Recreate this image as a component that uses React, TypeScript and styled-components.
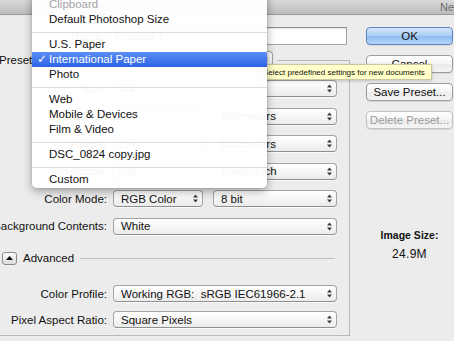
import React from "react";
import styled, { createGlobalStyle } from "styled-components";

const GlobalStyle = createGlobalStyle`
  html, body {
    margin: 0;
    padding: 0;
    background: #ececec;
  }
  body {
    font-family: "Liberation Sans", Arial, sans-serif;
  }
`;

const presetGroups: string[][] = [
  ["Clipboard", "Default Photoshop Size"],
  ["U.S. Paper", "International Paper", "Photo"],
  ["Web", "Mobile & Devices", "Film & Video"],
  ["DSC_0824 copy.jpg"],
  ["Custom"],
];

const Arrows = () => (
  <svg width="5" height="9" viewBox="0 0 5 9">
    <path d="M0 3.6 L2.5 0.6 L5 3.6 Z M0 5.4 L2.5 8.4 L5 5.4 Z" fill="#3a3a3a" />
  </svg>
);

type PopupProps = { width: number; value: string };

const PopupButton: React.FC<PopupProps> = ({ width, value }) => (
  <StyledPopup $width={width}>
    <StyledPopupText>{value}</StyledPopupText>
    <Arrows />
  </StyledPopup>
);

const App: React.FC = () => {
  return (
    <>
      <GlobalStyle />
      <StyledScreen>
        <StyledTitleBar>New</StyledTitleBar>
        <StyledBody>
          <StyledMainColumn>
            <StyledRow $height={18}>
              <StyledLabel $width={145} $gap={5}>Name:</StyledLabel>
              <StyledTextField $width={237} $height={18}>Untitled-1</StyledTextField>
            </StyledRow>

            <StyledGroupBox>
              <StyledGroupHeader>
                <StyledHeaderLabel>Preset:</StyledHeaderLabel>
                <PopupButton width={235} value="International Paper" />
              </StyledGroupHeader>

              <StyledRows>
                <StyledRow $height={17}>
                  <StyledLabel $width={146} $gap={6}>Size:</StyledLabel>
                  <PopupButton width={224} value="A4" />
                </StyledRow>
                <StyledRow $height={17}>
                  <StyledLabel $width={146} $gap={6}>Width:</StyledLabel>
                  <StyledTextField $width={90} $height={17}>210</StyledTextField>
                  <StyledSpacer />
                  <PopupButton width={124} value="Millimeters" />
                </StyledRow>
                <StyledRow $height={17}>
                  <StyledLabel $width={146} $gap={6}>Height:</StyledLabel>
                  <StyledTextField $width={90} $height={17}>297</StyledTextField>
                  <StyledSpacer />
                  <PopupButton width={124} value="Millimeters" />
                </StyledRow>
                <StyledRow $height={17}>
                  <StyledLabel $width={146} $gap={6}>Resolution:</StyledLabel>
                  <StyledTextField $width={90} $height={17}>300</StyledTextField>
                  <StyledSpacer />
                  <PopupButton width={124} value="Pixels/Inch" />
                </StyledRow>
                <StyledRow $height={17}>
                  <StyledLabel $width={146} $gap={6}>Color Mode:</StyledLabel>
                  <PopupButton width={90} value="RGB Color" />
                  <StyledSpacer />
                  <PopupButton width={124} value="8 bit" />
                </StyledRow>
                <StyledRow $height={17}>
                  <StyledLabel $width={146} $gap={6}>Background Contents:</StyledLabel>
                  <PopupButton width={224} value="White" />
                </StyledRow>
              </StyledRows>

              <StyledAdvancedRow>
                <StyledDisclosure>
                  <svg width="7" height="4" viewBox="0 0 7 4">
                    <path d="M0 4 L3.5 0 L7 4 Z" fill="#111" />
                  </svg>
                </StyledDisclosure>
                <StyledAdvancedText>Advanced</StyledAdvancedText>
                <StyledAdvancedLine />
              </StyledAdvancedRow>

              <StyledAdvancedRows>
                <StyledRow $height={17}>
                  <StyledLabel $width={146} $gap={6}>Color Profile:</StyledLabel>
                  <PopupButton width={224} value="Working RGB:  sRGB IEC61966-2.1" />
                </StyledRow>
                <StyledRow $height={17}>
                  <StyledLabel $width={146} $gap={6}>Pixel Aspect Ratio:</StyledLabel>
                  <PopupButton width={224} value="Square Pixels" />
                </StyledRow>
              </StyledAdvancedRows>
            </StyledGroupBox>
          </StyledMainColumn>

          <StyledSideColumn>
            <StyledButton $variant="default">OK</StyledButton>
            <StyledButton>Cancel</StyledButton>
            <StyledButton>Save Preset...</StyledButton>
            <StyledButton $variant="disabled">Delete Preset...</StyledButton>
            <StyledImageSizeLabel>Image Size:</StyledImageSizeLabel>
            <StyledImageSizeValue>24.9M</StyledImageSizeValue>
          </StyledSideColumn>
        </StyledBody>

        <StyledTooltip>Select predefined settings for new documents</StyledTooltip>

        <StyledMenu>
          {presetGroups.map((group, gi) => (
            <React.Fragment key={gi}>
              {gi > 0 && <StyledMenuSeparator />}
              {group.map((item) => (
                <StyledMenuItem
                  key={item}
                  $active={item === "International Paper"}
                  $disabled={item === "Clipboard"}
                >
                  {item === "International Paper" && <StyledCheck>✓</StyledCheck>}
                  {item}
                </StyledMenuItem>
              ))}
            </React.Fragment>
          ))}
        </StyledMenu>
      </StyledScreen>
    </>
  );
};

export default App;

const StyledScreen = styled.div`
  position: relative;
  width: 454px;
  height: 341px;
  overflow: hidden;
  background: #ececec;
  font-family: "Liberation Sans", Arial, sans-serif;
  font-size: 11.5px;
  color: #111;
`;
const StyledTitleBar = styled.div`
  height: 15px;
  box-sizing: border-box;
  border-bottom: 1px solid #9a9a9a;
  background: linear-gradient(#dadada, #bcbcbc);
  display: flex;
  align-items: center;
  padding-left: 440px;
  font-size: 11px;
  color: #6a6a6a;
  white-space: nowrap;
`;
const StyledBody = styled.div`
  display: flex;
  align-items: flex-start;
  margin-left: -40px;
  padding-top: 12px;
`;
const StyledMainColumn = styled.div`
  width: 390px;
  flex: none;
`;
const StyledRow = styled.div<{ $height: number }>`
  display: flex;
  align-items: center;
  height: ${(p) => p.$height}px;
`;
const StyledLabel = styled.div<{ $width: number; $gap: number }>`
  width: ${(p) => p.$width}px;
  margin-right: ${(p) => p.$gap}px;
  flex: none;
  display: flex;
  justify-content: flex-end;
  white-space: nowrap;
`;
const StyledTextField = styled.div<{ $width: number; $height: number }>`
  width: ${(p) => p.$width}px;
  height: ${(p) => p.$height}px;
  flex: none;
  box-sizing: border-box;
  border: 1px solid #a2a2a2;
  border-top-color: #8c8c8c;
  background: #fff;
  box-shadow: inset 0 1px 1px rgba(0, 0, 0, 0.1);
  padding-left: 4px;
  display: flex;
  align-items: center;
`;
const StyledSpacer = styled.div`
  width: 10px;
  flex: none;
`;
const StyledPopup = styled.div<{ $width: number }>`
  width: ${(p) => p.$width}px;
  height: 17px;
  flex: none;
  box-sizing: border-box;
  border: 1px solid #a4a4a4;
  border-bottom-color: #8f8f8f;
  border-radius: 4px;
  background: linear-gradient(#ffffff, #f6f6f6 50%, #ececec);
  box-shadow: 0 1px 0 rgba(255, 255, 255, 0.7);
  display: flex;
  align-items: center;
  padding: 0 4px 0 7px;
`;
const StyledPopupText = styled.span`
  flex: 1;
  white-space: pre;
  overflow: hidden;
`;
const StyledGroupBox = styled.div`
  margin-top: 15px;
  border: 1px solid #b9b9b9;
  padding-bottom: 7px;
`;
const StyledGroupHeader = styled.div`
  display: flex;
  align-items: center;
  width: fit-content;
  height: 17px;
  margin: -10px 0 0 36px;
  padding: 0 4px 0 2px;
  gap: 3px;
  background: #ececec;
`;
const StyledHeaderLabel = styled.span`
  white-space: nowrap;
`;
const StyledRows = styled.div`
  display: flex;
  flex-direction: column;
  gap: 10.5px;
  padding-top: 12px;
`;
const StyledAdvancedRow = styled.div`
  display: flex;
  align-items: center;
  height: 15px;
  margin-top: 16px;
  padding-left: 41px;
`;
const StyledDisclosure = styled.div`
  width: 15px;
  height: 13px;
  box-sizing: border-box;
  border: 1px solid #8c8c8c;
  border-radius: 3px;
  background: linear-gradient(#fdfdfd, #dcdcdc);
  display: flex;
  align-items: center;
  justify-content: center;
`;
const StyledAdvancedText = styled.span`
  margin-left: 6px;
  white-space: nowrap;
`;
const StyledAdvancedLine = styled.div`
  flex: 1;
  height: 1px;
  background: #c0c0c0;
  margin: 0 14px 0 6px;
`;
const StyledAdvancedRows = styled.div`
  display: flex;
  flex-direction: column;
  gap: 9px;
  margin-top: 19.5px;
`;
const StyledSideColumn = styled.div`
  width: 87px;
  margin-left: 16px;
  flex: none;
  display: flex;
  flex-direction: column;
  gap: 10px;
`;
const StyledButton = styled.div<{ $variant?: "default" | "disabled" }>`
  height: 18px;
  box-sizing: border-box;
  border-radius: 4px;
  display: flex;
  align-items: center;
  justify-content: center;
  white-space: nowrap;
  border: 1px solid ${(p) => (p.$variant === "default" ? "#5f86c0" : p.$variant === "disabled" ? "#c2c2c2" : "#9c9c9c")};
  background: ${(p) =>
    p.$variant === "default"
      ? "linear-gradient(#d3e6fa, #a9cdf4 50%, #8dbcf0 51%, #b3d6f8)"
      : "linear-gradient(#ffffff, #f5f5f5 50%, #ebebeb 51%, #f4f4f4)"};
  color: ${(p) => (p.$variant === "disabled" ? "#9a9a9a" : "#111")};
  box-shadow: 0 1px 1px rgba(0, 0, 0, 0.08);
`;
const StyledImageSizeLabel = styled.div`
  margin-top: 89px;
  text-align: center;
  font-weight: bold;
  font-size: 10.5px;
  line-height: 14px;
`;
const StyledImageSizeValue = styled.div`
  margin-top: -5px;
  text-align: center;
  font-size: 12px;
  letter-spacing: 0.3px;
  line-height: 14px;
`;
const StyledTooltip = styled.div`
  position: absolute;
  left: 260px;
  top: 64px;
  z-index: 2;
  height: 16px;
  box-sizing: border-box;
  padding: 0 6px 0 2px;
  display: flex;
  align-items: center;
  background: #ffffc7;
  border: 1px solid #c8c8a6;
  font-size: 8px;
  color: #111;
  white-space: nowrap;
  box-shadow: 0 1px 3px rgba(0, 0, 0, 0.2);
`;
const StyledMenu = styled.div`
  position: absolute;
  left: 32px;
  top: -8px;
  z-index: 3;
  width: 235px;
  padding: 5px 0 1px;
  background: rgba(255, 255, 255, 0.96);
  border-radius: 0 0 5px 5px;
  box-shadow: 0 3px 10px rgba(0, 0, 0, 0.35), 0 0 0 1px rgba(0, 0, 0, 0.05);
`;
const StyledMenuItem = styled.div<{ $active?: boolean; $disabled?: boolean }>`
  position: relative;
  height: 15px;
  line-height: 15px;
  padding-left: 17px;
  white-space: nowrap;
  color: ${(p) => (p.$active ? "#fff" : p.$disabled ? "#a3a3a3" : "#111")};
  background: ${(p) => (p.$active ? "linear-gradient(#5b8ef5, #2d63e6)" : "transparent")};
`;
const StyledCheck = styled.span`
  position: absolute;
  left: 5px;
  top: 0;
  font-family: "DejaVu Sans", sans-serif;
  font-size: 12px;
  font-weight: bold;
`;
const StyledMenuSeparator = styled.div`
  height: 10px;
  display: flex;
  align-items: center;
  &::after {
    content: "";
    flex: 1;
    height: 1px;
    background: #dcdcdc;
  }
`;
